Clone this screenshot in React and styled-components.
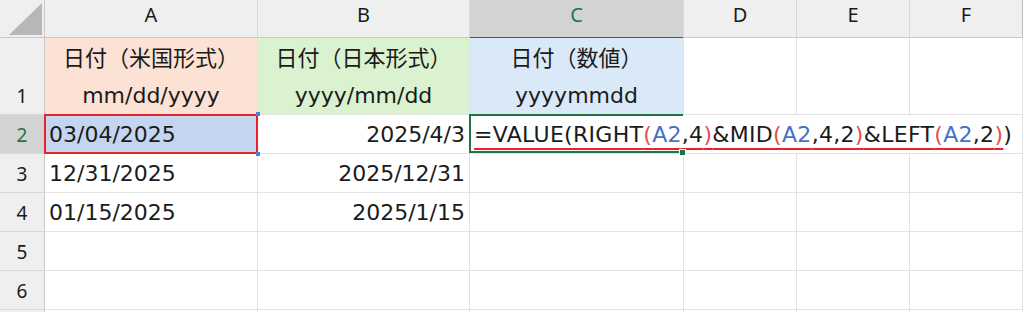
import React from "react";
import styled, { createGlobalStyle } from "styled-components";

const GlobalStyle = createGlobalStyle`
  html, body {
    margin: 0;
    padding: 0;
    background: #fff;
    overflow: hidden;
  }
  body {
    font-family: "DejaVu Sans", "Noto Sans CJK JP", sans-serif;
    color: #1b1b1b;
  }
`;

const GREEN = "#217346";
const GRID = "#e2e2e2";
const HEAD_LINE = "#c9c9c9";

const Sheet = styled.div`
  display: grid;
  grid-template-columns: 45px 213px 212px 214px 113px 113px 113px;
  grid-template-rows: 38px 77px repeat(6, 39px);
  width: 1023px;
`;

const Corner = styled.div`
  background: #efefef;
  border-right: 1px solid ${HEAD_LINE};
  border-bottom: 1px solid ${HEAD_LINE};
  box-sizing: border-box;
  display: flex;
  align-items: flex-end;
  justify-content: flex-end;
  padding: 0 2px 2px 0;
  svg {
    display: block;
  }
`;

const ColHeader = styled.div`
  box-sizing: border-box;
  background: ${(p) => (p.$active ? "#d3d3d3" : "#efefef")};
  color: ${(p) => (p.$active ? GREEN : "#1b1b1b")};
  border-right: 1px solid ${(p) => (p.$last ? "#bdbdbd" : "#d9d9d9")};
  border-bottom: ${(p) => (p.$active ? `2px solid ${GREEN}` : `1px solid ${HEAD_LINE}`)};
  margin-bottom: ${(p) => (p.$active ? "-1px" : "0")};
  font-family: "Noto Sans", sans-serif;
  font-size: 20px;
  line-height: 30px;
  text-align: center;
`;

const RowHeader = styled.div`
  box-sizing: border-box;
  background: ${(p) => (p.$active ? "#d3d3d3" : "#efefef")};
  color: ${(p) => (p.$active ? GREEN : "#1b1b1b")};
  border-right: 1px solid ${HEAD_LINE};
  border-bottom: 1px solid #d9d9d9;
  font-family: "Noto Sans", sans-serif;
  font-size: 19px;
  line-height: 36px;
  display: flex;
  flex-direction: column;
  justify-content: flex-end;
  text-align: center;
`;

const Cell = styled.div`
  box-sizing: border-box;
  position: ${(p) => (p.$selected || p.$active ? "relative" : "static")};
  background: ${(p) => p.$fill || "transparent"};
  border-right: 1px solid ${(p) => (p.$overflow ? "transparent" : GRID)};
  border-bottom: 1px solid ${GRID};
  padding: 0 4px;
  font-size: 22px;
  line-height: 37px;
  display: flex;
  flex-direction: column;
  justify-content: flex-end;
  text-align: ${(p) => p.$align || "left"};
  white-space: nowrap;
  overflow: visible;

  ${(p) =>
    p.$selected &&
    `
    &::after {
      content: "";
      position: absolute;
      top: -1px;
      left: -1px;
      right: -1px;
      bottom: -1px;
      border: 2px solid #e8222c;
      pointer-events: none;
    }
  `}

  ${(p) =>
    p.$active &&
    `
    &::before {
      content: "";
      position: absolute;
      top: -1px;
      left: -1px;
      right: 0;
      bottom: 0;
      border: 2px solid ${GREEN};
      border-right: none;
      pointer-events: none;
    }
  `}
`;

const Corners = styled.span`
  position: absolute;
  right: -3px;
  width: 4px;
  height: 4px;
  background: #4f7fd0;
  top: ${(p) => (p.$bottom ? "auto" : "-3px")};
  bottom: ${(p) => (p.$bottom ? "-3px" : "auto")};
  z-index: 2;
`;

const FillHandle = styled.span`
  position: absolute;
  right: -3px;
  bottom: -3px;
  width: 5px;
  height: 5px;
  background: ${GREEN};
  border: 1px solid #fff;
  z-index: 2;
`;

const Formula = styled.span`
  position: relative;
  z-index: 1;
  letter-spacing: 0.3px;
`;

const Marked = styled.span`
  text-decoration: underline;
  text-decoration-color: #e8222c;
  text-decoration-thickness: 2px;
  text-underline-offset: 6px;
`;

const Ref = styled.span`
  color: #4472c4;
`;

const Paren = styled.span`
  color: #e05252;
`;

const columns = ["A", "B", "C", "D", "E", "F"];

const data = [
  ["03/04/2025", "2025/4/3"],
  ["12/31/2025", "2025/12/31"],
  ["01/15/2025", "2025/1/15"],
];

const Triangle = () => (
  <svg width="33" height="32" viewBox="0 0 33 32">
    <polygon points="33,0 33,32 0,32" fill="#b7b7b7" />
  </svg>
);

const FormulaText = () => (
  <Formula>
    <Marked>
      =VALUE(RIGHT<Paren>(</Paren>
      <Ref>A2</Ref>,4<Paren>)</Paren>&amp;MID<Paren>(</Paren>
      <Ref>A2</Ref>,4,2<Paren>)</Paren>&amp;LEFT<Paren>(</Paren>
      <Ref>A2</Ref>,2<Paren>)</Paren>
    </Marked>
    )
  </Formula>
);

const EmptyRow = ({ n }) => (
  <>
    <RowHeader>{n}</RowHeader>
    {columns.map((c) => (
      <Cell key={c} />
    ))}
  </>
);

export default function App() {
  return (
    <>
      <GlobalStyle />
      <Sheet>
        <Corner>
          <Triangle />
        </Corner>
        {columns.map((c, i) => (
          <ColHeader key={c} $active={c === "C"} $last={i === columns.length - 1}>
            {c}
          </ColHeader>
        ))}

        <RowHeader>1</RowHeader>
        <Cell $fill="#fbe2d5" $align="center">
          <div>日付（米国形式）</div>
          <div>mm/dd/yyyy</div>
        </Cell>
        <Cell $fill="#daf2d0" $align="center">
          <div>日付（日本形式）</div>
          <div>yyyy/mm/dd</div>
        </Cell>
        <Cell $fill="#dae9f8" $align="center">
          <div>日付（数値）</div>
          <div>yyyymmdd</div>
        </Cell>
        <Cell />
        <Cell />
        <Cell />

        <RowHeader $active>2</RowHeader>
        <Cell $fill="#c6d5ef" $selected>
          {data[0][0]}
          <Corners />
          <Corners $bottom />
        </Cell>
        <Cell $align="right">{data[0][1]}</Cell>
        <Cell $active $overflow>
          <FormulaText />
          <FillHandle />
        </Cell>
        <Cell $overflow />
        <Cell $overflow />
        <Cell />

        {data.slice(1).map((row, i) => (
          <React.Fragment key={i}>
            <RowHeader>{i + 3}</RowHeader>
            <Cell>{row[0]}</Cell>
            <Cell $align="right">{row[1]}</Cell>
            <Cell />
            <Cell />
            <Cell />
            <Cell />
          </React.Fragment>
        ))}

        <EmptyRow n={5} />
        <EmptyRow n={6} />
        <EmptyRow n="" />
      </Sheet>
    </>
  );
}
